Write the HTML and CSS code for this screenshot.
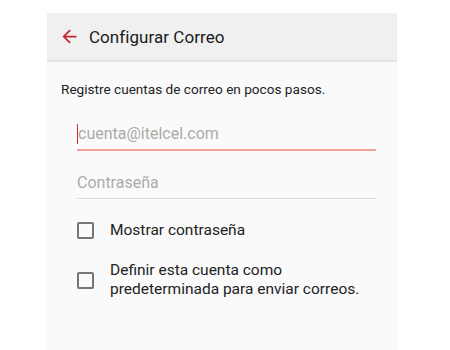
FILE: index.html
```html
<!DOCTYPE html>
<html lang="es">
<head>
<meta charset="utf-8">
<title>Configurar Correo</title>
<link rel="stylesheet" href="styles.css">
</head>
<body>
<div class="panel">
  <header class="appbar">
    <svg class="back" viewBox="0 0 24 24" width="20" height="20" aria-hidden="true">
      <path d="M20 11H7.83l5.59-5.59L12 4l-8 8 8 8 1.41-1.41L7.83 13H20v-2z" fill="#c0282d"/>
    </svg>
    <h1 class="title">Configurar Correo</h1>
  </header>
  <main class="content">
    <p class="intro">Registre cuentas de correo en pocos pasos.</p>
    <div class="field field-active">
      <span class="cursor"></span><span class="placeholder">cuenta@itelcel.com</span>
    </div>
    <div class="field">
      <span class="placeholder">Contraseña</span>
    </div>
    <label class="check">
      <span class="box"></span>
      <span class="check-text">Mostrar contraseña</span>
    </label>
    <label class="check check-two">
      <span class="box"></span>
      <span class="check-text">Definir esta cuenta como<br>predeterminada para enviar correos.</span>
    </label>
  </main>
</div>
</body>
</html>
```
FILE: styles.css
```css
html, body {
  margin: 0;
  padding: 0;
  background: #ffffff;
  height: 100%;
  overflow: hidden;
}
body {
  font-family: Roboto, "Noto Sans", sans-serif;
  color: #212121;
}
.panel {
  margin: 13px 0 0 47px;
  width: 350px;
  height: 337px;
  background: #fafafa;
  display: flex;
  flex-direction: column;
}
.appbar {
  height: 47px;
  background: #f0f0f0;
  border-bottom: 2px solid #e4e4e4;
  display: flex;
  align-items: center;
  padding-left: 12px;
  flex-shrink: 0;
}
.back {
  display: block;
  width: 21px;
  height: 21px;
}
.title {
  margin: 0 0 0 9px;
  font-size: 17px;
  font-weight: 400;
  color: #1a1a1a;
  letter-spacing: 0.05px;
}
.content {
  padding: 0 0 0 14px;
  display: flex;
  flex-direction: column;
}
.intro {
  margin: 18px 0 0 0;
  font-size: 13.6px;
  color: #222;
  line-height: 18px;
}
.field {
  margin: 18px 0 0 16px;
  width: 299px;
  height: 31px;
  display: flex;
  align-items: center;
  border-bottom: 1.5px solid #dcdcdc;
  position: relative;
}
.field-active {
  margin-top: 20px;
  border-bottom: 2px solid #f4a19b;
}
.field + .field {
  margin-top: 16px;
}
.placeholder {
  font-size: 16px;
  color: #ababab;
}
.cursor {
  display: inline-block;
  width: 1px;
  height: 20px;
  background: #d32f2f;
}
.check {
  margin: 22px 0 0 16px;
  display: flex;
  align-items: center;
  gap: 16px;
}
.check-two {
  margin-top: 21px;
}
.box {
  width: 13px;
  height: 13px;
  border: 2px solid #757575;
  border-radius: 2px;
  flex-shrink: 0;
}
.check-text {
  font-size: 15.5px;
  line-height: 19px;
  color: #222;
}
```
